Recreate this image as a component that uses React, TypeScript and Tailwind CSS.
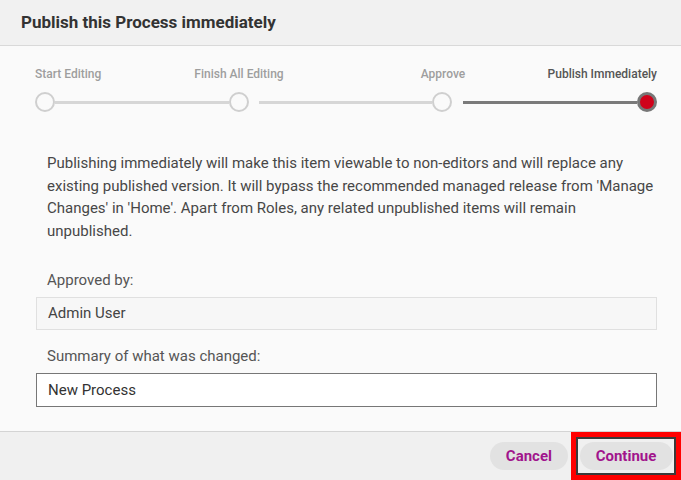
import React from 'react';

const steps = [
  { label: 'Start Editing', align: 'justify-start' },
  { label: 'Finish All Editing', align: 'justify-center' },
  { label: 'Approve', align: 'justify-center' },
  { label: 'Publish Immediately', align: 'justify-end' },
];

function Circle({ active = false }: { active?: boolean }) {
  if (active) {
    return (
      <div className="w-[20px] h-[20px] rounded-full border-[3px] border-[#777777] bg-[#d0021b] shrink-0" />
    );
  }
  return (
    <div className="w-[20px] h-[20px] rounded-full border-[2.5px] border-[#cfcfcf] bg-[#fafafa] shrink-0" />
  );
}

function Stepper() {
  return (
    <div className="mx-[35px] w-[622px]">
      {/* Labels */}
      <div className="flex items-center h-[16px]">
        {steps.map((step, i) => (
          <React.Fragment key={step.label}>
            {i > 0 && <div className={i === 1 ? 'flex-1' : 'flex-1 ml-[10px]'} />}
            <div className={`w-[20px] shrink-0 flex ${step.align}`}>
              <span
                className={`whitespace-nowrap text-[12px] font-medium ${
                  i === 3 ? 'text-[#555555]' : 'text-[#9e9e9e]'
                }`}
              >
                {step.label}
              </span>
            </div>
          </React.Fragment>
        ))}
      </div>

      {/* Track */}
      <div className="flex items-center mt-[10px]">
        <Circle />
        <div className="flex-1 h-[3px] bg-[#d6d6d6]" />
        <Circle />
        <div className="flex-1 h-[3px] bg-[#d6d6d6] ml-[10px]" />
        <Circle />
        <div className="flex-1 h-[3px] bg-[#7a7a7a] ml-[11px]" />
        <Circle active />
      </div>
    </div>
  );
}

export default function App() {
  return (
    <div
      className="w-[681px] h-[480px] flex flex-col bg-[#fafafa] overflow-hidden"
      style={{ fontFamily: 'Roboto, "Liberation Sans", sans-serif' }}
    >
      {/* Header */}
      <div className="h-[46px] shrink-0 bg-[#f1f1f1] border-b border-[#d9d9d9] flex items-center px-[21px]">
        <h1 className="text-[17px] font-bold text-[#333333]">Publish this Process immediately</h1>
      </div>

      {/* Body */}
      <div className="flex-1 pt-[20px]">
        <Stepper />

        <div className="mx-[36px] w-[621px] mt-[40px]">
          <p className="pl-[11px] text-[15px] leading-[22.5px] text-[#474747]">
            Publishing immediately will make this item viewable to non-editors and will replace any
            existing published version. It will bypass the recommended managed release from 'Manage
            Changes' in 'Home'. Apart from Roles, any related unpublished items will remain
            unpublished.
          </p>

          <div className="mt-[27px] px-[11px] text-[15px] leading-[22px] text-[#555555]">
            Approved by:
          </div>
          <div className="mt-[6px] h-[33px] border border-[#e0e0e0] bg-[#f7f7f7] flex items-center px-[11px] text-[15px] text-[#444444]">
            Admin User
          </div>

          <div className="mt-[15px] px-[11px] text-[15px] leading-[22px] text-[#555555]">
            Summary of what was changed:
          </div>
          <div className="mt-[6px] h-[34px] border border-[#777777] bg-white flex items-center px-[11px] text-[15px] text-[#333333]">
            New Process
          </div>
        </div>
      </div>

      {/* Footer */}
      <div className="h-[49px] shrink-0 bg-[#f0f0f0] border-t border-[#d4d4d4] flex items-center justify-end">
        <button className="h-[28px] px-[16px] rounded-full bg-[#e2e2e2] text-[15px] font-bold text-[#a1148c]">
          Cancel
        </button>
        <div className="ml-[3px] h-[48px] w-[110px] border-[5px] border-[#ff0000] shadow-[inset_0_0_0_2px_#3a3a3a] flex items-center justify-center">
          <button className="h-[28px] w-[93px] rounded-full bg-[#e2e2e2] text-[15px] font-bold text-[#a1148c]">
            Continue
          </button>
        </div>
      </div>
    </div>
  );
}
